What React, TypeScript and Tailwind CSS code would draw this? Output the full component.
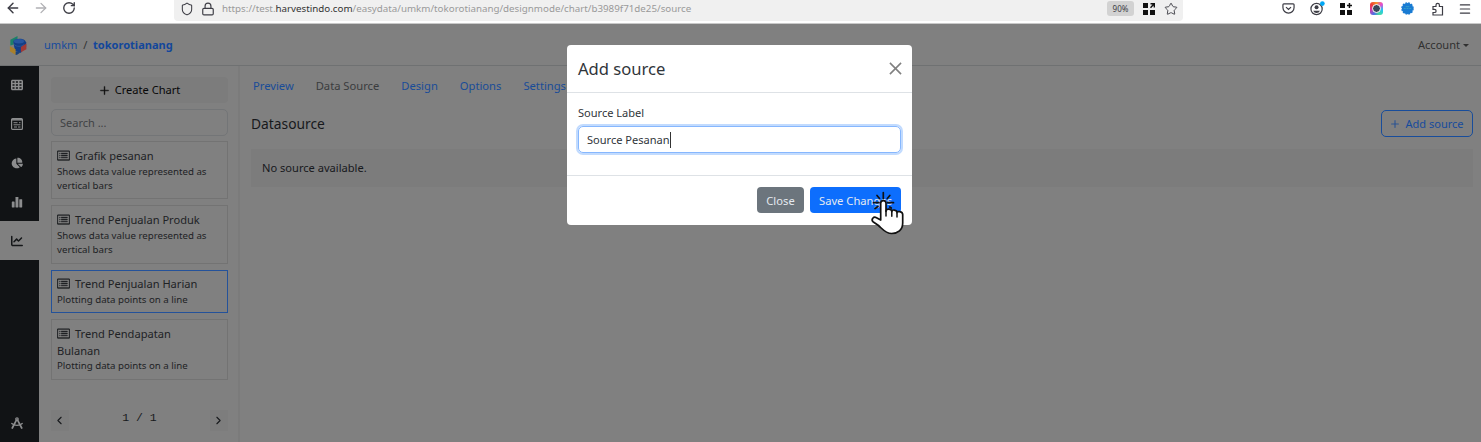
import type { ReactNode } from "react";
import { BsCardList, BsPlusLg } from "react-icons/bs";
import { FaChartPie, FaChartLine, FaTableCells } from "react-icons/fa6";
import { ArrowLeft, ArrowRight, RotateCw, Lock, Shield, Star, Menu, ChevronLeft, ChevronRight } from "lucide-react";

function Logo() {
  return (
    <svg viewBox="0 0 20 22" className="h-[21px] w-[20px]">
      <path d="M2 5 9.500 1v3.500L5.500 7v3L2 11z" fill="#1c8069" />
      <path d="M5 7c1-3.500 10-4 12.500-1l1 1.500V12L13 18.500 7 17z" fill="#143f86" />
      <ellipse cx="11" cy="6.500" rx="5.300" ry="2.300" fill="#2756a0" />
      <path d="M6 10c2 2.500 8 2.500 10 0" stroke="#2756a0" fill="none" />
      <path d="m13 12.500 5.800-3.500v6L13 18z" fill="#a03a35" />
      <path d="m1.500 11.500 6 3.500v6l-6-4z" fill="#a9802a" />
      <path d="m7.500 17.500 5.500.5-4 2.800-1.500.2z" fill="#1c4379" />
    </svg>
  );
}

function QrGlyph() {
  return <svg viewBox="0 0 12 12" className="size-[12px] shrink-0" fill="#111"><path d="M0 0h5v5H0zM0 7h5v5H0zM7 7h5v5H7zM7.500 0H12v4.500h-1.400V2.600L8 5.200l-1-1L9.500 1.500h-2z" /></svg>;
}

function BrowserBar() {
  return (
    <div className="flex h-[24px] shrink-0 items-start border-b border-[#c9c9c9] bg-white text-[#3d3d45]">
      <div className="flex w-[174px] shrink-0 items-center gap-[12px] pl-[5px]">
        <ArrowLeft size={16} strokeWidth={2.200} />
        <ArrowRight size={16} strokeWidth={1.900} className="text-[#b0b0b4]" />
        <RotateCw size={14} strokeWidth={2.300} className="ml-px" />
      </div>
      <div className="flex h-[21px] w-[1009px] shrink-0 items-center rounded-b bg-[#f0f0f0] pb-[4px] pl-[6px] pr-[5px]">
        <Shield size={14} strokeWidth={1.800} />
        <Lock size={14} strokeWidth={2} className="ml-[7px]" />
        <span className="ml-[7px] whitespace-pre pt-[2px] text-[9.780px] text-[#9a9a9a]">https://test.<span className="text-[#333]">harvestindo.com</span>/easydata/umkm/tokorotianang/designmode/chart/b3989f71de25/source</span>
        <span className="ml-auto mr-[9px] flex h-[15px] w-[27px] items-center justify-center rounded-[3px] bg-[#d2d2d2] text-[8px]">90%</span>
        <QrGlyph />
        <Star size={14} strokeWidth={1.600} className="ml-[9px]" />
      </div>
      <div className="flex h-[17px] flex-1 items-center pl-[99px]">
        <svg viewBox="0 0 14 14" className="size-[13px]" fill="none" stroke="currentColor" strokeWidth="1.300"><path d="M2 2h10q1 0 1 1v3a6 6 0 0 1-12 0V3q0-1 1-1zM4.300 5.500 7 8l2.700-2.500" /></svg>
        <svg viewBox="0 0 16 16" className="ml-[15px] size-[15px]" fill="none" stroke="currentColor" strokeWidth="1.300"><circle cx="7" cy="8.500" r="6" /><circle cx="7" cy="6.700" r="2.100" fill="currentColor" stroke="none" /><path d="M3.400 10.300h7.200q-1 2.500-3.600 2.500t-3.600-2.500" fill="currentColor" stroke="none" /><circle cx="13.200" cy="2.700" r="2.500" fill="#00a7f5" stroke="none" /></svg>
        <svg viewBox="0 0 12 12" className="ml-[15px] size-[12px]" fill="#111"><path d="M0 0h5v5H0zM0 7h5v5H0zM7 7h5v5H7zM8.700 0h1.500v1.800H12v1.500h-1.800v1.800H8.700V3.300H7V1.800h1.700z" /></svg>
        <span className="ml-[18px] flex size-[13px] items-center justify-center rounded-[3px] bg-[conic-gradient(#f7962c,#e84bd0,#21c6f7,#45db9b,#4c70e8,#d837a5,#ef3c38,#f7962c)]"><span className="size-[9px] rounded-full border border-white bg-[#39485c]" /></span>
        <svg viewBox="0 0 14 14" className="ml-[18px] size-[13px]"><circle cx="7" cy="7" r="6" fill="#197bd3" stroke="#197bd3" strokeWidth="1.500" strokeDasharray="2 1.140" /><path d="M3 7h2m1 0h2m1 0h2M5 5h4" stroke="#36a2c7" /></svg>
        <svg viewBox="0 0 13 14" className="ml-[17px] h-[14px] w-[13px]" fill="none" stroke="currentColor" strokeWidth="1.200"><path d="M2 4.500h3V3a1.700 1.700 0 0 1 3.400 0v1.500H11.500V13H2v-2.500h1.500a1.600 1.600 0 0 0 0-3.200H2z" /></svg>
        <Menu size={14} strokeWidth={1.900} className="ml-[14px]" />
      </div>
    </div>
  );
}

function RailItem({ children, active = false }: { children: ReactNode; active?: boolean }) {
  return <div className={active ? "flex h-[38.800px] items-center justify-center bg-[#808080] pr-[5px] text-[#151719]" : "flex h-[38.800px] items-center justify-center pr-[5px] text-[#8c8d8e]"}>{children}</div>;
}

function ChartCard({ title, text, size, active = false }: { title: string; text: string; size: string; active?: boolean }) {
  return (
    <div className={`${size} ${active ? "border-[#24529a] pt-[5px]" : "border-[#737373] pt-[6px]"} shrink-0 border px-[5px]`}>
      <div className="pr-[16px] text-[11.100px] leading-[16.500px] text-[#202225]"><BsCardList size={13} className="mr-[5px] inline-block align-[-2px]" stroke="currentColor" strokeWidth={0.500} />{title}</div>
      <div className="text-[9.700px] leading-[14.400px] text-[#202225]">{text}</div>
    </div>
  );
}

function Pointer() {
  return (
    <svg viewBox="0 0 36 46" className="absolute left-[303px] top-[145px] h-[46px] w-[36px]" strokeLinecap="round" strokeLinejoin="round">
      <path d="M13.300 2.500v6M7 5.500l2.500 3M19.800 5.500l-2.500 3M3.500 12.700h5.500M17.800 12.700h5.700M5 18.500l3-2M19.800 17l1.500 1" stroke="#111" strokeWidth="1.700" fill="none" />
      <path d="M10.700 30V13.300c0-3.500 5.300-3.500 5.300 0v8c0-3 5.800-2.800 5.800.3 0-2.500 5.200-2 5.200 1 0-1.800 5.700-1.300 5.700 2v8.400c0 7-5 10.500-11 10.500-6.200 0-9.200-4.500-13.200-8L3 31.700c-2.200-2.500.5-5.500 3.500-4z" fill="white" stroke="#111" strokeWidth="1.700" />
      <path d="M16 20.500v5.500M21.800 21.500v4.700M27 23v4" stroke="#111" strokeWidth="1.500" />
    </svg>
  );
}

export default function App() {
  return (
    <div className="relative flex h-[442px] w-[1481px] flex-col overflow-hidden bg-[#808080] font-['Noto_Sans',sans-serif] text-[#17191c]">
      <BrowserBar />
      <header className="flex h-[42px] shrink-0 items-center border-b border-[#6f7172] pl-[8px] pr-[12px] pt-[2px] text-[11.050px]">
        <Logo />
        <div className="ml-[16px] whitespace-pre text-[#164b9d]">umkm<span className="text-[#333]">  /  </span><b className="text-[#13479b]">tokorotianang</b></div>
        <div className="ml-auto flex items-center text-[#303030]">Account<span className="ml-[3px] border-x-[3px] border-t-[3px] border-x-transparent border-t-[#303030]" /></div>
      </header>
      <div className="flex min-h-0 flex-1">
        <aside className="flex w-[39px] shrink-0 flex-col bg-[#111315]">
          <RailItem><FaTableCells size={12} /></RailItem>
          <RailItem>
            <svg viewBox="0 0 12 12" className="size-[12px]" fill="none" stroke="currentColor"><rect x=".6" y=".6" width="10.800" height="10.800" rx="1" strokeWidth="1.200" /><path d="M1 1.800h10" strokeWidth="1.500" /><path d="M2.500 4.700h4M8 4.700h1.500M2.500 6.800h7M3 9h3M7 9h2.500" strokeWidth="1" /></svg>
          </RailItem>
          <RailItem><FaChartPie size={12} /></RailItem>
          <RailItem>
            <svg viewBox="0 0 12 12" className="size-[12px]" fill="currentColor"><rect x=".8" y="5.500" width="2.800" height="6" rx=".4" /><rect x="4.500" y="1" width="2.900" height="10.500" rx=".4" /><rect x="8.300" y="3.200" width="2.900" height="8.300" rx=".4" /></svg>
          </RailItem>
          <RailItem active><FaChartLine size={12} /></RailItem>
          <div className="mt-auto">
            <RailItem>
              <svg viewBox="0 0 12 12" className="size-[12px]" fill="none" stroke="currentColor" strokeLinecap="round"><circle cx="6" cy="2" r="1.200" strokeWidth="1.300" /><path d="M5.300 3.300 1.300 11M6.700 3.300l4 7.700" strokeWidth="1.700" /><path d="M.8 6.500c2.500 2.500 7.900 2.500 10.400 0" strokeWidth="1.300" /></svg>
            </RailItem>
          </div>
        </aside>
        <section className="flex w-[201px] shrink-0 flex-col border-r-2 border-[#7b7b7b] pl-[12px] pr-[9px] pt-[11px]">
          <div className="flex h-[26px] w-[177px] shrink-0 items-center justify-center gap-[5px] rounded bg-[#7c7c7c] pt-px text-[11.100px] text-[#080808]"><BsPlusLg size={11} stroke="currentColor" strokeWidth={0.700} />Create Chart</div>
          <div className="mt-[6px] flex h-[27px] w-[177px] shrink-0 items-center rounded-[5px] border border-[#737577] pl-[8px] pt-px text-[11px] text-[#404244]">Search ...</div>
          <div className="mt-[5px] flex w-[177px] flex-col gap-[6px]">
            <ChartCard title="Grafik pesanan" text="Shows data value represented as vertical bars" size="h-[58px]" />
            <ChartCard title="Trend Penjualan Produk" text="Shows data value represented as vertical bars" size="h-[59px]" />
            <ChartCard title="Trend Penjualan Harian" text="Plotting data points on a line" size="h-[43px]" active />
            <ChartCard title="Trend Pendapatan Bulanan" text="Plotting data points on a line" size="h-[61px]" />
          </div>
          <div className="mt-[29px] flex h-[22px] w-[177px] items-center justify-between">
            <span className="flex h-[21px] w-[18px] items-center justify-center bg-[#7d7d7d] pr-px"><ChevronLeft size={13} /></span>
            <span className="pb-[4px] font-['Liberation_Mono',monospace] text-[11.500px]">1 / 1</span>
            <span className="flex h-[21px] w-[18px] items-center justify-center bg-[#7d7d7d]"><ChevronRight size={13} /></span>
          </div>
        </section>
        <main className="flex flex-1 flex-col pl-[11px] pr-[8px]">
          <nav className="flex h-[39px] items-center gap-[22px] pl-[2px] pt-[2px] text-[11.200px] text-[#194c98]">
            <span>Preview</span><span className="text-[#3a3c3e]">Data Source</span><span>Design</span><span>Options</span><span>Settings</span>
          </nav>
          <div className="mt-[5px] flex h-[27px] items-center justify-between">
            <h2 className="pt-[2px] text-[13.800px]">Datasource</h2>
            <div className="flex h-[27px] w-[92px] items-center justify-center gap-[5px] rounded-[5px] border border-[#184d9b] pt-px text-[11.050px] text-[#164b9d]"><BsPlusLg size={10} stroke="currentColor" strokeWidth={0.300} />Add source</div>
          </div>
          <div className="mt-[12px] flex h-[38px] items-center bg-[#7c7c7c] pl-[11px] text-[11.100px]">No source available.</div>
        </main>
      </div>
      <div className="absolute left-[567px] top-[45px] h-[180px] w-[345px] rounded-[4px] bg-white text-[#30353a]">
        <div className="flex h-[48px] items-center justify-between border-b border-[#dee2e6] pl-[11px] pr-[10px] text-[16.600px]">
          <span className="pt-[2px]">Add source</span>
          <svg viewBox="0 0 14 14" className="size-[13px]" stroke="#808080" strokeWidth="1.700"><path d="m1 1 12 12M13 1 1 13" /></svg>
        </div>
        <div className="h-[83px] border-b border-[#dee2e6] px-[11px] pt-[12px] text-[11.050px]">
          <div className="h-[21px] leading-[16px]">Source Label</div>
          <div className="flex h-[27px] items-center rounded-[5px] border border-[#86b7fe] pl-[8px] ring-2 ring-[#c2dbfe]"><span className="pt-[2px]">Source Pesanan</span><span className="h-[16px] w-px bg-[#333]" /></div>
        </div>
        <div className="flex h-[49px] items-center justify-end gap-[6px] pb-px pr-[11px] text-[11.200px] text-[#e5eaf0]">
          <div className="flex h-[26px] w-[47px] items-center justify-center rounded bg-[#6c757d] pt-[2px]">Close</div>
          <div className="flex h-[26px] w-[91px] items-center whitespace-nowrap rounded bg-[#0d6efd] pl-[9px] pt-[2px]">Save Changes</div>
        </div>
        <Pointer />
      </div>
    </div>
  );
}
